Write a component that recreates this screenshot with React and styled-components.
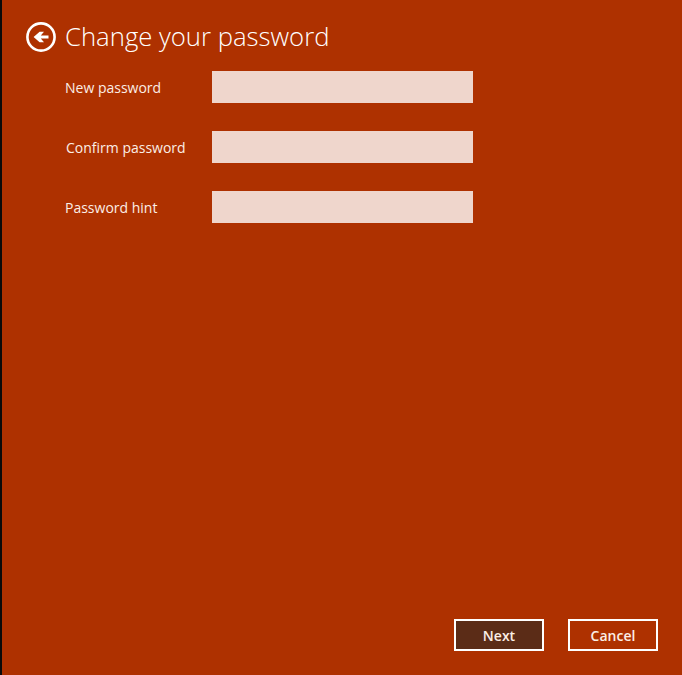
import React from "react";
import styled, { createGlobalStyle } from "styled-components";

const GlobalStyle = createGlobalStyle`
  html, body {
    margin: 0;
    padding: 0;
    background: #ae3100;
  }
`;

const Page = styled.div`
  box-sizing: border-box;
  width: 682px;
  height: 675px;
  padding: 22px 24px 24px 24px;
  border-left: 2px solid #0a0a0a;
  background: #ae3100;
  color: #fbeee6;
  font-family: "Open Sans", "Noto Sans", sans-serif;
  display: flex;
  flex-direction: column;
`;

const Header = styled.div`
  display: flex;
  align-items: flex-start;
  gap: 9px;
  height: 30px;
`;

const BackButton = styled.button`
  width: 30px;
  height: 30px;
  padding: 0;
  border: none;
  background: none;
  display: flex;
`;

const Title = styled.h1`
  margin: 0;
  font-size: 25.7px;
  font-weight: 300;
  line-height: 30px;
  color: #fff;
`;

const Form = styled.div`
  margin-top: 19px;
  margin-left: 39px;
  display: flex;
  flex-direction: column;
  gap: 28px;
`;

const Row = styled.label`
  display: flex;
  align-items: center;
  height: 32px;
`;

const Label = styled.span`
  width: 147px;
  font-size: 14px;
  line-height: 32px;
  margin-top: 2px;
  padding-left: ${(p) => (p.$nudge ? "1px" : "0")};
  box-sizing: border-box;
`;

const Input = styled.input`
  box-sizing: border-box;
  width: 261px;
  height: 32px;
  border: none;
  padding: 0 8px;
  background: #efd6cc;
  outline: none;
`;

const Footer = styled.div`
  margin-top: auto;
  display: flex;
  justify-content: flex-end;
  gap: 24px;
`;

const Button = styled.button`
  box-sizing: border-box;
  width: 90px;
  height: 32px;
  border: 2px solid #fff;
  background: ${(p) => (p.$primary ? "#5b2c17" : "transparent")};
  color: #fbeee6;
  font-family: inherit;
  font-size: 14px;
  font-weight: 600;
  padding: 0;
`;

function BackIcon() {
  return (
    <svg width="30" height="30" viewBox="0 0 30 30" fill="none">
      <circle cx="15" cy="15" r="13.6" stroke="#fff" strokeWidth="2.6" />
      <path d="M22.5 13.4H14.8L18 9.8H13.6L7.6 15L13.6 20.2H18L14.8 16.6H22.5Z" fill="#fff" />
    </svg>
  );
}

export default function App() {
  const fields = ["New password", "Confirm password", "Password hint"];
  return (
    <Page>
      <GlobalStyle />
      <Header>
        <BackButton aria-label="Back">
          <BackIcon />
        </BackButton>
        <Title>Change your password</Title>
      </Header>
      <Form>
        {fields.map((field, index) => (
          <Row key={field}>
            <Label $nudge={index === 1}>{field}</Label>
            <Input type={index === 2 ? "text" : "password"} />
          </Row>
        ))}
      </Form>
      <Footer>
        <Button $primary>Next</Button>
        <Button>Cancel</Button>
      </Footer>
    </Page>
  );
}
